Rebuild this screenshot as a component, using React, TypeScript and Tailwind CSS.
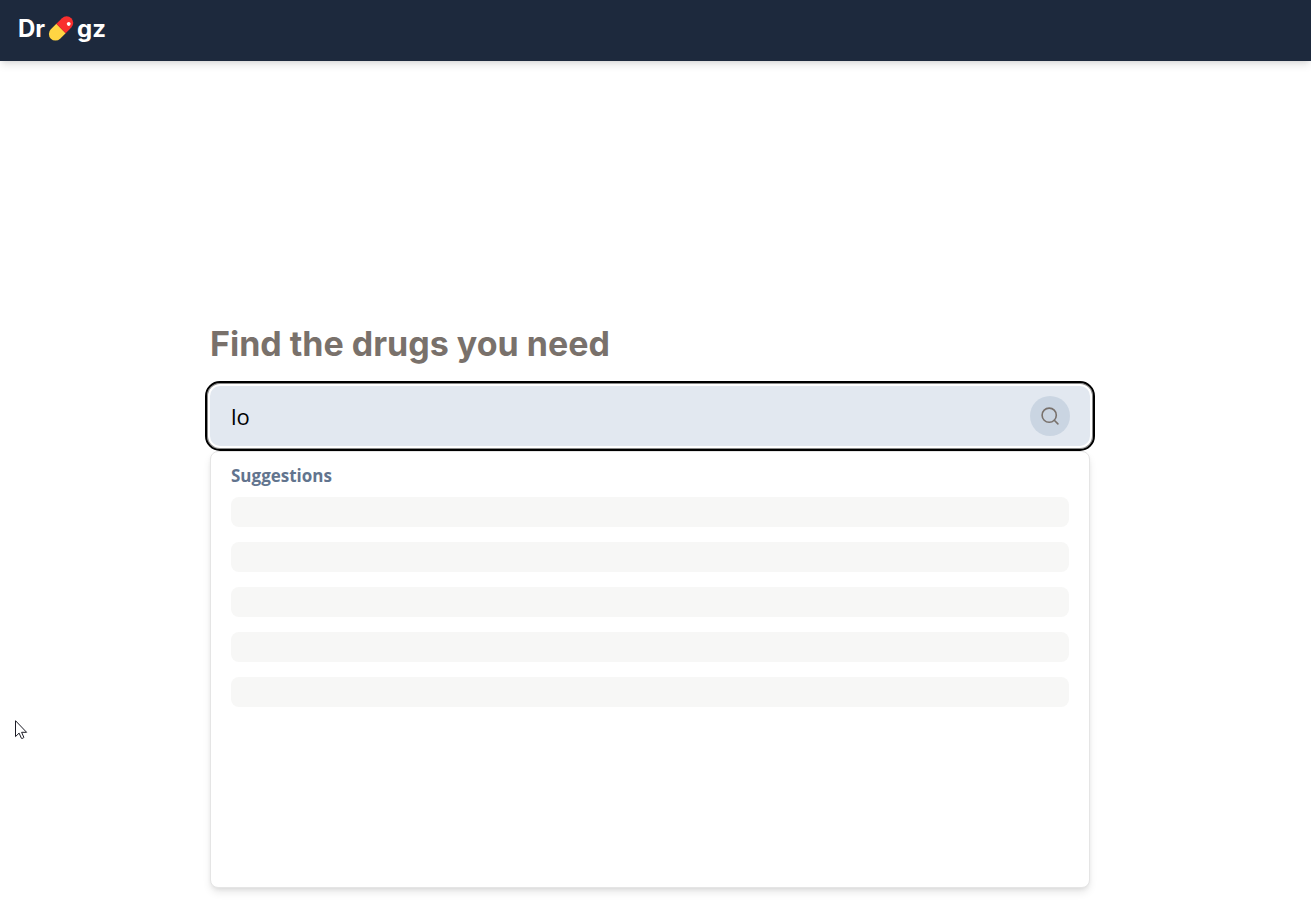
import { useState } from "react";

function Pill() {
  return (
    <svg viewBox="0 0 26 26" className="h-[26px] w-[26px]" aria-hidden="true">
      <g transform="rotate(-45 13 12.5)">
        <path d="M13 5.9H5.2a6.6 6.6 0 0 0 0 13.2H13z" fill="#ffd543" />
        <path d="M13 5.9h8a6.6 6.6 0 0 1 0 13.2h-8z" fill="#f92f2e" />
        <circle cx="21.7" cy="14.7" r="1.9" fill="#fff" />
      </g>
    </svg>
  );
}

function SearchIcon() {
  return (
    <svg
      viewBox="0 0 20 20"
      className="h-5 w-5"
      fill="none"
      stroke="#78716c"
      strokeWidth="1.6"
      strokeLinecap="round"
      aria-hidden="true"
    >
      <circle cx="9.2" cy="9.2" r="7.1" />
      <path d="M14.3 14.3l3.6 3.6" />
    </svg>
  );
}

function Pointer() {
  return (
    <svg viewBox="0 0 13 20" className="pointer-events-none absolute left-[15px] top-[720px] h-5 w-[13px]" aria-hidden="true">
      <path
        d="M.5.7v15.9l3.6-3.5 2.3 5.2c.3.6 2.7-.4 2.4-1.1l-2.2-4.9h5z"
        fill="#fff"
        stroke="#1b1b25"
        strokeWidth="1"
      />
    </svg>
  );
}

export default function App() {
  const [query, setQuery] = useState("lo");

  return (
    <div className="relative min-h-screen bg-white font-['Inter','Open_Sans',sans-serif]">
      <header className="flex h-[61px] items-center bg-slate-800 px-[18px] pb-1 shadow-[0_5px_8px_-1px_rgb(0_0_0/0.1),0_2px_5px_-2px_rgb(0_0_0/0.1)]">
        <a href="#" className="flex items-center gap-[3px] text-2xl font-bold text-white">
          <span>Dr</span>
          <Pill />
          <span>gz</span>
        </a>
      </header>

      <main className="flex justify-center px-5 pt-[260px]">
        <div className="mr-[11px] w-full max-w-[880px]">
          <h1 className="mb-5 text-[34px] leading-[45px] font-bold text-stone-500">
            <label htmlFor="drug-search">Find the drugs you need</label>
          </h1>

          <form
            onSubmit={(event) => event.preventDefault()}
            className="flex h-[60px] items-center rounded-[10px] bg-slate-200 px-5 shadow-[0_0_0_2px_#fff,0_0_0_3px_#8a8a8a] outline-2 outline-offset-[3px] outline-black"
          >
            <input
              id="drug-search"
              type="text"
              autoComplete="off"
              value={query}
              onChange={(event) => setQuery(event.target.value)}
              className="min-w-0 flex-1 bg-transparent px-px font-['Open_Sans',sans-serif] text-[22px] leading-8 text-black outline-none"
            />
            <button
              type="submit"
              aria-label="Search"
              className="flex h-10 w-10 items-center justify-center rounded-full bg-slate-300"
            >
              <SearchIcon />
            </button>
          </form>

          <section className="mt-[5px] min-h-[437px] rounded-lg border border-neutral-200 bg-white px-5 pt-2.5 shadow-[0_5px_8px_-1px_rgb(0_0_0/0.1),0_2px_5px_-2px_rgb(0_0_0/0.1)]">
            <h2 className="mb-2 font-['Open_Sans',sans-serif] text-[17px] leading-[27px] font-bold text-slate-500">
              Suggestions
            </h2>
            <div className="flex flex-col gap-[15px]" aria-busy="true">
              {[0, 1, 2, 3, 4].map((row) => (
                <div key={row} className="h-[30px] rounded-lg bg-[#f7f7f6]" />
              ))}
            </div>
          </section>
        </div>
      </main>
      <Pointer />
    </div>
  );
}
